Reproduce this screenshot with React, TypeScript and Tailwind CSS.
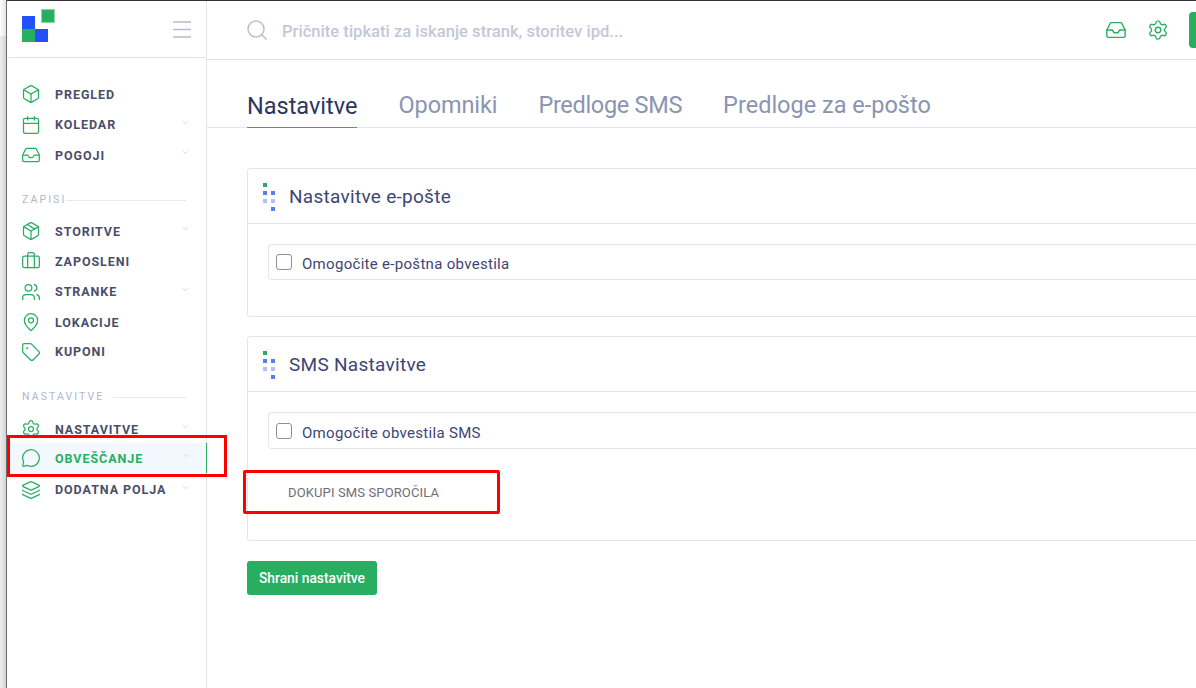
import {
  Box,
  Briefcase,
  Calendar,
  ChevronDown,
  Inbox,
  Layers,
  MapPin,
  MessageCircle,
  Package,
  Search,
  Settings,
  Tag,
  Users,
} from 'lucide-react'
import type { ComponentType, ReactNode } from 'react'

type NavItem = {
  label: string
  icon: ComponentType<{ size?: number; strokeWidth?: number; className?: string }>
  height: string
  chevron?: boolean
  active?: boolean
}

const mainItems: NavItem[] = [
  { label: 'PREGLED', icon: Box, height: 'h-[30px]' },
  { label: 'KOLEDAR', icon: Calendar, height: 'h-[31px]', chevron: true },
  { label: 'POGOJI', icon: Inbox, height: 'h-[30px]', chevron: true },
]

const recordItems: NavItem[] = [
  { label: 'STORITVE', icon: Package, height: 'h-[30px]', chevron: true },
  { label: 'ZAPOSLENI', icon: Briefcase, height: 'h-[30px]' },
  { label: 'STRANKE', icon: Users, height: 'h-[31px]', chevron: true },
  { label: 'LOKACIJE', icon: MapPin, height: 'h-[30px]' },
  { label: 'KUPONI', icon: Tag, height: 'h-[29px]' },
]

const settingsItems: NavItem[] = [
  { label: 'NASTAVITVE', icon: Settings, height: 'h-[28px]', chevron: true },
  { label: 'OBVEŠČANJE', icon: MessageCircle, height: 'h-[30px]', chevron: true, active: true },
  { label: 'DODATNA POLJA', icon: Layers, height: 'h-[33px]', chevron: true },
]

function NavRow({ item }: { item: NavItem }) {
  const Icon = item.icon
  return (
    <div className={`relative flex items-center pl-[14px] pr-[16px] ${item.height} ${item.active ? '-mr-px bg-[#f3f7fe]' : ''}`}>
      <Icon size={20} strokeWidth={1.5} className="shrink-0 text-[#27ae60]" />
      <span
        className={`ml-[14px] flex-1 pt-[2px] text-[12.5px] font-bold tracking-[0.075em] ${
          item.active ? 'text-[#27ae60]' : 'text-[#4a4e69]'
        }`}
      >
        {item.label}
      </span>
      {item.chevron && <ChevronDown size={9} strokeWidth={1.5} className="mb-[5px] text-[#b4b9e6]" />}
      {item.active && <span className="absolute inset-y-0 right-0 w-px bg-[#27ae60]" />}
    </div>
  )
}

function SectionLabel({ children, line }: { children: string; line: string }) {
  return (
    <div className="flex h-[18px] items-center pl-[15px] pr-[20px]">
      <span className="text-[10.5px] tracking-[0.2em] text-[#b3b7c9]">{children}</span>
      <span className={`ml-auto h-px bg-[#e9eaf0] ${line}`} />
    </div>
  )
}

function Dots() {
  return (
    <svg width="12" height="28" viewBox="0 0 12 28" className="mt-[2px] shrink-0">
      <rect x="0" y="0" width="4" height="4" fill="#27ae60" />
      <rect x="0" y="8" width="4" height="4" fill="#5b7cf5" />
      <rect x="8" y="8" width="4" height="4" fill="#5b7cf5" />
      <rect x="0" y="16" width="4" height="4" fill="#b2c1fa" />
      <rect x="8" y="16" width="4" height="4" fill="#b2c1fa" />
      <rect x="8" y="24" width="4" height="4" fill="#5b7cf5" />
    </svg>
  )
}

function CheckRow({ label, height }: { label: string; height: string }) {
  return (
    <div className={`flex items-center rounded-[3px] border border-[#e6e7ee] pl-[7px] ${height}`}>
      <span className="h-[16px] w-[16px] rounded-[3px] border border-[#8f8f9d] bg-white" />
      <span className="ml-[10px] mt-[5px] text-[15px] tracking-[0.02em] text-[#3d4673]">{label}</span>
    </div>
  )
}

function Card({ title, height, children }: { title: string; height: string; children: ReactNode }) {
  return (
    <section className={`-mr-10 rounded-[3px] border border-[#e3e4ec] ${height}`}>
      <div className="flex h-[55px] items-center gap-[14px] border-b border-[#e6e7ee] pl-[15px]">
        <Dots />
        <h2 className="mt-[3px] text-[19px] tracking-[0.015em] text-[#3d4673]">{title}</h2>
      </div>
      <div className="px-[20px] pt-[20px]">{children}</div>
    </section>
  )
}

export default function App() {
  return (
    <div className="relative flex h-[688px] w-[1196px] overflow-hidden bg-white font-['Roboto',sans-serif]">
      {/* edge of the window behind the captured page */}
      <div className="flex w-[7px] shrink-0 flex-col border-r border-[#6b6b6b]">
        <div className="h-[36px] bg-gradient-to-r from-white to-[#e4e4e4]" />
        <div className="flex-1 bg-gradient-to-r from-[#eeeeee] to-[#d4d4d4]" />
      </div>

      <div className="flex min-w-0 flex-1 flex-col border-t border-[#333]">
        <div className="flex min-h-0 flex-1">
          <aside className="w-[200px] shrink-0 border-r border-[#e3e4ec]">
            <div className="flex h-[57px] items-center justify-between border-b border-[#e3e4ec] pl-[15px] pr-[15px]">
              <svg width="34" height="34" viewBox="0 0 34 34" className="mt-[-9px]">
                <rect x="0" y="8" width="13" height="13" fill="#2250fc" />
                <rect x="0" y="21" width="13" height="13" fill="#27ae60" />
                <rect x="13" y="21" width="13" height="13" fill="#2250fc" />
                <rect x="19.5" y="1.5" width="13" height="13" fill="#27ae60" stroke="#93d6ae" />
              </svg>
              <svg width="18" height="17" viewBox="0 0 18 17" className="mt-[1px] text-[#b5bccb]">
                <path d="M0 1h18M0 8.5h18M0 16h18" stroke="currentColor" strokeWidth="1.6" fill="none" />
              </svg>
            </div>

            <nav className="pt-[21px]">
              {mainItems.map((item) => (
                <NavRow key={item.label} item={item} />
              ))}

              <div className="mb-[7px] mt-[21px]">
                <SectionLabel line="w-[122px]">ZAPISI</SectionLabel>
              </div>
              {recordItems.map((item) => (
                <NavRow key={item.label} item={item} />
              ))}

              <div className="mb-[9px] mt-[22px]">
                <SectionLabel line="w-[73px]">NASTAVITVE</SectionLabel>
              </div>
              {settingsItems.map((item) => (
                <NavRow key={item.label} item={item} />
              ))}
            </nav>
          </aside>

          <div className="min-w-0 flex-1">
            <header className="flex h-[59px] items-center border-b border-[#dfdfe3] pl-[38px]">
              <Search size={24} strokeWidth={1.6} className="text-[#bcc3d2]" />
              <span className="ml-[13px] mt-[5px] text-[16.6px] font-medium text-[#c3c8d8]">
                Pričnite tipkati za iskanje strank, storitev ipd...
              </span>
              <div className="ml-auto flex items-center">
                <Inbox size={22} strokeWidth={1.5} className="text-[#27ae60]" />
                <Settings size={22} strokeWidth={1.5} className="ml-[20px] text-[#27ae60]" />
                <div className="ml-[20px] h-[36px] w-[7px] rounded-l-[4px] bg-[#27ae60]" />
              </div>
            </header>

            <div className="flex h-[68px] items-end gap-[41px] border-b border-[#e6e7ee] pl-[40px]">
              <div className="-mb-px flex h-[52px] items-center border-b border-[#27ae60] pt-[10px] text-[23.5px] text-[#2c3563]">
                Nastavitve
              </div>
              <div className="flex h-[52px] items-center pt-[10px] text-[23.5px] tracking-[-0.1px] text-[#8a94b2]">Opomniki</div>
              <div className="flex h-[52px] items-center pt-[10px] text-[23.5px] tracking-[-0.3px] text-[#8a94b2]">Predloge SMS</div>
              <div className="flex h-[52px] items-center pt-[10px] text-[23.5px] text-[#8a94b2]">Predloge za e-pošto</div>
            </div>

            <div className="pl-[40px] pt-[40px]">
              <Card title="Nastavitve e-pošte" height="h-[149px]">
                <CheckRow label="Omogočite e-poštna obvestila" height="h-[36px]" />
              </Card>
              <div className="mt-[19px]">
                <Card title="SMS Nastavitve" height="h-[205px]">
                  <CheckRow label="Omogočite obvestila SMS" height="h-[37px]" />
                  <div className="mt-[34px] pl-[20px] text-[13px] tracking-[0.01em] text-[#6c6f7a]">DOKUPI SMS SPOROČILA</div>
                </Card>
              </div>
              <button className="mt-[20px] h-[34px] w-[130px] rounded-[3px] bg-[#27ae60] text-[13.8px] font-medium text-white">
                Shrani nastavitve
              </button>
            </div>
          </div>
        </div>
      </div>

      {/* red annotation boxes drawn on top of the screenshot */}
      <div className="absolute left-[7px] top-[435px] h-[42px] w-[220px] border-[3px] border-[#f00]" />
      <div className="absolute left-[243px] top-[470px] h-[44px] w-[257px] rounded-[2px] border-[3px] border-[#f00]" />
    </div>
  )
}
